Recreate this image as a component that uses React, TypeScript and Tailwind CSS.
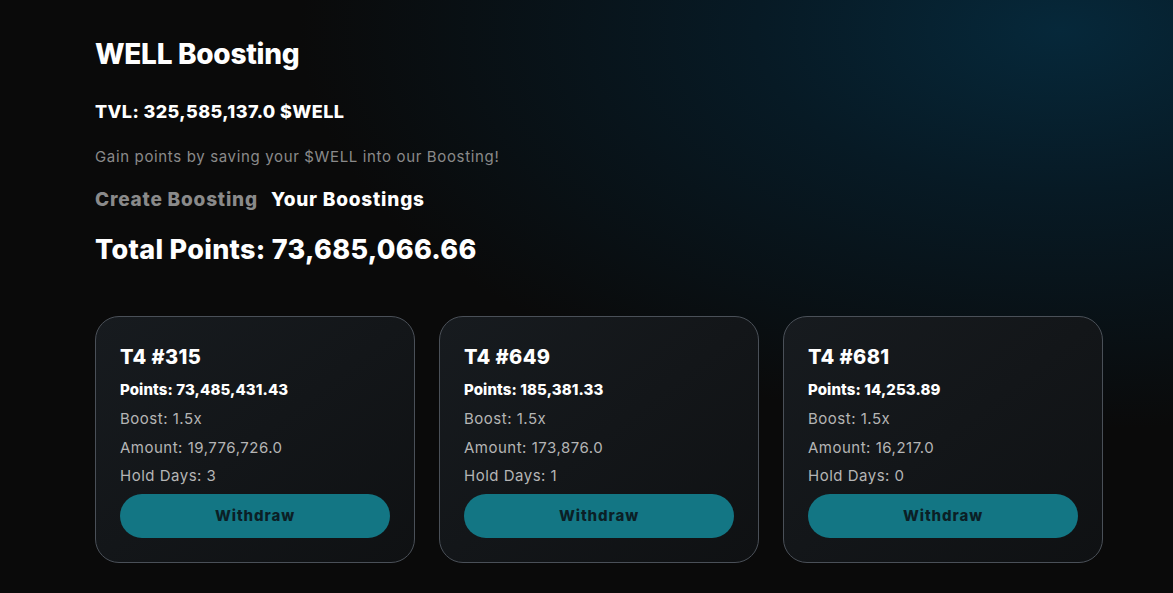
import React from 'react';

const boostings = [
  { id: '315', tier: 'T4', points: '73,485,431.43', boost: '1.5x', amount: '19,776,726.0', days: 3 },
  { id: '649', tier: 'T4', points: '185,381.33', boost: '1.5x', amount: '173,876.0', days: 1 },
  { id: '681', tier: 'T4', points: '14,253.89', boost: '1.5x', amount: '16,217.0', days: 0 },
];

export default function App() {
  return (
    <div
      className="min-h-[593px] w-full bg-[#0a0a0a] text-white bg-[radial-gradient(ellipse_760px_400px_at_1060px_30px,#06283a_0%,#071a25_40%,#0a0a0a_100%)]"
      style={{ fontFamily: 'Inter, "Noto Sans", sans-serif' }}
    >
      <div className="pl-[95px] pt-[36px] pb-[30px]">
        <h1 className="text-[28px] font-extrabold leading-[36px] tracking-[-0.3px]">WELL Boosting</h1>
        <p className="mt-[27px] text-[18px] font-extrabold leading-[26px] tracking-[0.4px]">TVL: 325,585,137.0 $WELL</p>
        <p className="mt-[21px] text-[15px] leading-[22px] tracking-[0.65px] text-[#8a8a8a]">
          Gain points by saving your $WELL into our Boosting!
        </p>
        <div className="mt-[18px] flex gap-[13px] text-[19px] font-extrabold leading-[28px] tracking-[0.8px]">
          <button className="text-[#8a8a8a]">Create Boosting</button>
          <button className="text-white">Your Boostings</button>
        </div>
        <h2 className="mt-[18px] text-[27px] font-extrabold leading-[36px] tracking-[0.3px]">Total Points: 73,685,066.66</h2>

        <div className="mt-[48px] flex gap-[24px]">
          {boostings.map((b) => (
            <div
              key={b.id}
              className="w-[320px] h-[247px] rounded-[24px] border border-[#4a5058] bg-gradient-to-br from-[#171b1f] to-[#0f1113] px-[24px] pt-[26px]"
            >
              <h3 className="text-[20px] font-extrabold leading-[28px] tracking-[0.4px]">
                {b.tier} #{b.id}
              </h3>
              <p className="mt-[8px] text-[15px] font-extrabold leading-[22px] tracking-[0.1px]">Points: {b.points}</p>
              <p className="mt-[7px] text-[15px] leading-[22px] tracking-[0.5px] text-[#b5b5b5]">Boost: {b.boost}</p>
              <p className="mt-[7px] text-[15px] leading-[22px] tracking-[0.5px] text-[#b5b5b5]">Amount: {b.amount}</p>
              <p className="mt-[6px] text-[15px] leading-[22px] tracking-[0.5px] text-[#b5b5b5]">Hold Days: {b.days}</p>
              <button className="mt-[7px] w-[270px] h-[44px] rounded-full bg-[#137684] text-[15px] font-extrabold tracking-[0.9px] text-[#0b1f26]">
                Withdraw
              </button>
            </div>
          ))}
        </div>
      </div>
    </div>
  );
}
